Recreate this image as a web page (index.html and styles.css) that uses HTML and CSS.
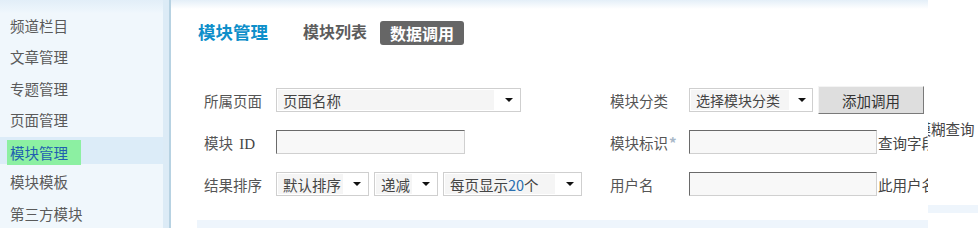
FILE: index.html
```html
<!DOCTYPE html>
<html lang="zh">
<head>
<meta charset="utf-8">
<title>模块管理</title>
<link rel="stylesheet" href="styles.css">
</head>
<body>
<div class="page">
  <aside class="sidebar">
    <div class="side-list">
      <div class="side-item">频道栏目</div>
      <div class="side-item">文章管理</div>
      <div class="side-item">专题管理</div>
      <div class="side-item">页面管理</div>
      <div class="side-item active"><span class="hl">模块管理</span></div>
      <div class="side-item">模块模板</div>
      <div class="side-item">第三方模块</div>
    </div>
    <div class="side-edge"></div>
  </aside>
  <main class="main">
    <div class="topband"></div>
    <div class="content">
      <div class="header">
        <span class="title">模块管理</span>
        <span class="tab">模块列表</span>
        <span class="tab current">数据调用</span>
      </div>
      <div class="form">
        <div class="row">
          <div class="col-left">
            <span class="label">所属页面</span>
            <div class="sel w245"><span class="sel-text">页面名称</span><span class="sel-arrow"></span></div>
          </div>
          <div class="col-right">
            <span class="label rl">模块分类</span>
            <div class="sel w124"><span class="sel-text">选择模块分类</span><span class="sel-arrow"></span></div>
            <span class="btn">添加调用</span>
          </div>
        </div>
        <div class="row">
          <div class="col-left">
            <span class="label">模块 <span class="id">ID</span></span>
            <div class="input w189"></div>
          </div>
          <div class="col-right">
            <span class="label rl">模块标识<span class="star">*</span></span>
            <div class="input w188"></div>
            <span class="hint">查询字段名称</span>
          </div>
        </div>
        <div class="row">
          <div class="col-left">
            <span class="label">结果排序</span>
            <div class="sel w93"><span class="sel-text">默认排序</span><span class="sel-arrow"></span></div>
            <div class="sel w64"><span class="sel-text">递减</span><span class="sel-arrow"></span></div>
            <div class="sel w139"><span class="sel-text">每页显示<span class="num">20</span>个</span><span class="sel-arrow"></span></div>
          </div>
          <div class="col-right">
            <span class="label rl">用户名</span>
            <div class="input w188"></div>
            <span class="hint">此用户名称</span>
          </div>
        </div>
      </div>
      <div class="bottombar"></div>
    </div>
  </main>
  <div class="strip">
    <div class="strip-text"><span>模糊查询</span></div>
    <div class="strip-bar"></div>
  </div>
</div>
</body>
</html>
```

FILE: styles.css
```css
html, body {
  margin: 0;
  padding: 0;
  background: #ffffff;
}
body {
  width: 978px;
  height: 228px;
  overflow: hidden;
  font-family: "Noto Sans CJK SC", "Liberation Sans", sans-serif;
  font-size: 14px;
  color: #555555;
}
.page {
  display: flex;
  width: 978px;
  height: 228px;
}
.sidebar {
  display: flex;
  width: 171px;
  flex: none;
  height: 228px;
}
.side-list {
  width: 163px;
  padding-top: 8px;
  background: linear-gradient(#e2eef8 0, #eef6fc 12px, #f0f7fc 13px);
}
.side-item {
  height: 27.25px;
  margin-top: 4px;
  display: flex;
  align-items: center;
  padding-left: 10px;
  font-size: 14.5px;
  color: #5a5a5a;
  white-space: nowrap;
}
.side-item.active {
  background: #dcecf8;
  padding-left: 7px;
  color: #1f5fb0;
}
.side-item .hl {
  background: #8cf0a2;
  height: 25px;
  margin-top: 4px;
  padding: 0 13px 0 3px;
  display: flex;
  align-items: center;
}
.side-edge {
  width: 8px;
  background: linear-gradient(to right, #dcebf6 0, #dcebf6 6px, #b7d2e2 6px, #b7d2e2 8px);
}
.main {
  width: 757px;
  flex: none;
  overflow: hidden;
  display: flex;
  flex-direction: column;
}
.topband {
  height: 10px;
  background: linear-gradient(#e4eff8, #ffffff);
}
.content {
  padding-left: 26px;
  display: flex;
  flex-direction: column;
}
.header {
  height: 44px;
  display: flex;
  align-items: center;
  white-space: nowrap;
}
.title {
  margin-left: 1px;
  font-size: 17.5px;
  font-weight: 700;
  color: #0e8fca;
  margin-right: 35px;
}
.tab {
  font-size: 16px;
  font-weight: 700;
  color: #5c5c5c;
  margin-right: 13px;
}
.tab.current {
  background: #666666;
  color: #ffffff;
  height: 24px;
  border-radius: 3px;
  padding: 0 10px;
  display: flex;
  align-items: center;
  margin-top: 3px;
}
.form {
  margin-top: 35px;
  padding-left: 7px;
}
.row {
  display: flex;
  align-items: center;
  height: 24px;
  margin-bottom: 18px;
  white-space: nowrap;
}
.row:last-child {
  margin-bottom: 0;
}
.col-left {
  width: 406px;
  flex: none;
  display: flex;
  align-items: center;
  gap: 5px;
  height: 24px;
}
.col-right {
  display: flex;
  align-items: center;
  height: 24px;
}
.label {
  width: 72px;
  flex: none;
  margin-right: -5px;
  color: #555555;
  font-size: 14.5px;
}
.label.rl {
  width: 79px;
  margin-right: 0;
}
.id {
  font-family: "Liberation Serif", serif;
  font-size: 15px;
  color: #444444;
  margin-left: 3px;
}
.star {
  color: #a8b8c8;
  font-size: 15px;
  font-weight: 700;
  margin-left: 1px;
}
.sel {
  box-sizing: border-box;
  height: 24px;
  border: 1px solid #cfcfcf;
  padding: 1px;
  display: flex;
  align-items: stretch;
  background: #ffffff;
  flex: none;
}
.sel-text {
  flex: 1;
  background: #f5f5f5;
  padding-left: 5px;
  display: flex;
  align-items: center;
  color: #444444;
  font-size: 14.5px;
  overflow: hidden;
}
.num {
  color: #2a6fb0;
}
.sel-arrow {
  width: 25px;
  flex: none;
  display: flex;
  align-items: center;
  justify-content: center;
}
.sel-arrow::after {
  content: "";
  border-left: 4px solid transparent;
  border-right: 4px solid transparent;
  border-top: 4px solid #111111;
  margin-left: 4px;
}
.w245 { width: 245px; }
.w124 { width: 124px; }
.w93 { width: 93px; }
.w64 { width: 64px; }
.w139 { width: 139px; }
.w124 .sel-text { padding-left: 5px; font-size: 14px; }
.w124 .sel-arrow { width: 22px; }
.w64 .sel-arrow, .w93 .sel-arrow { width: 24px; }
.input {
  box-sizing: border-box;
  height: 24px;
  background: #f8f8f8;
  border-top: 1px solid #6a6a6a;
  border-left: 1px solid #6a6a6a;
  border-right: 1px solid #d0d0d0;
  border-bottom: 1px solid #d0d0d0;
  flex: none;
}
.w189 { width: 189px; }
.w188 { width: 188px; }
.btn {
  box-sizing: border-box;
  width: 106px;
  height: 28px;
  margin-left: 5px;
  background: #dedede;
  border-top: 1px solid #f4f4f4;
  border-left: 1px solid #f4f4f4;
  border-right: 1px solid #7a7a7a;
  border-bottom: 1px solid #7a7a7a;
  display: flex;
  align-items: center;
  justify-content: center;
  color: #333333;
  font-size: 14.5px;
  flex: none;
}
.hint {
  color: #444444;
  margin-left: 1px;
  font-size: 14.5px;
}
.bottombar {
  margin-top: 24px;
  height: 8px;
  background: #eef5fc;
}
.strip {
  width: 50px;
  flex: none;
  overflow: hidden;
  background: #ffffff;
}
.strip-text {
  margin-top: 118px;
  height: 20px;
  white-space: nowrap;
  color: #444444;
  font-size: 14.5px;
  display: flex;
  align-items: center;
}
.strip-text span {
  margin-left: -11.5px;
}
.strip-bar {
  margin-top: 67px;
  height: 8px;
  background: #eef5fc;
}
```
